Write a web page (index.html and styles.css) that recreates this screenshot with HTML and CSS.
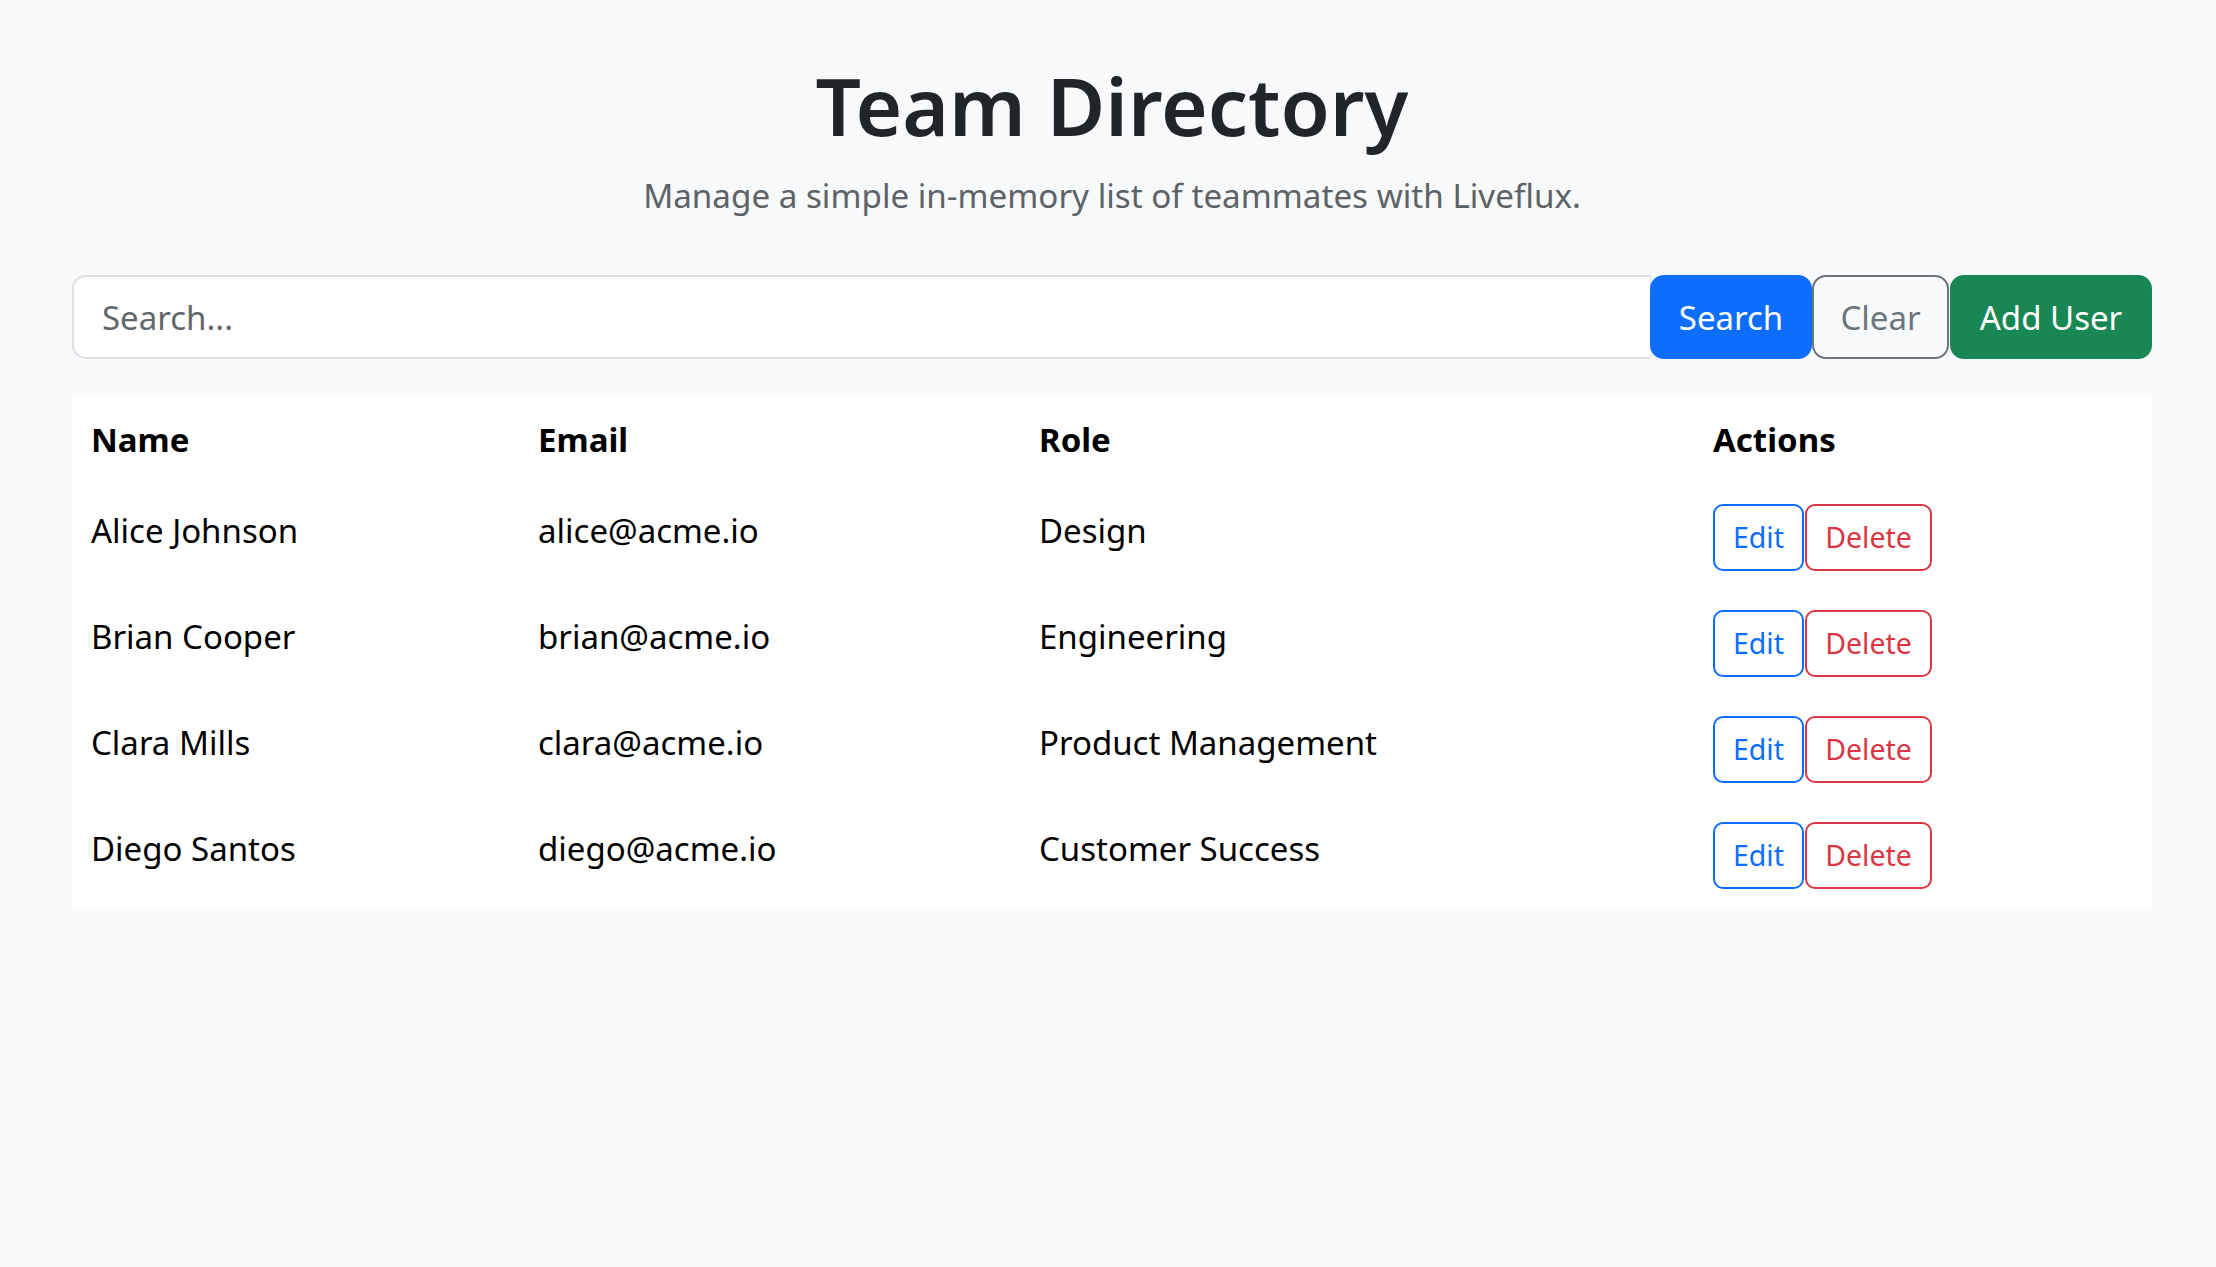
FILE: index.html
```html
<!DOCTYPE html>
<html lang="en">
<head>
<meta charset="utf-8">
<title>Team Directory</title>
<link rel="stylesheet" href="styles.css">
</head>
<body>
<main class="page">
  <header class="intro">
    <h1 class="title">Team Directory</h1>
    <p class="lead">Manage a simple in-memory list of teammates with Liveflux.</p>
  </header>

  <div class="search-group">
    <input class="search-input" type="text" placeholder="Search...">
    <button class="btn-lg btn-primary btn-search">Search</button>
    <button class="btn-lg btn-outline-secondary btn-clear">Clear</button>
    <button class="btn-lg btn-success btn-add">Add User</button>
  </div>

  <table class="users">
    <colgroup>
      <col class="col-name">
      <col class="col-email">
      <col class="col-role">
      <col class="col-actions">
    </colgroup>
    <thead>
      <tr><th>Name</th><th>Email</th><th>Role</th><th>Actions</th></tr>
    </thead>
    <tbody>
      <tr>
        <td>Alice Johnson</td><td>alice@acme.io</td><td>Design</td>
        <td><div class="actions"><button class="btn-sm btn-edit">Edit</button><button class="btn-sm btn-delete">Delete</button></div></td>
      </tr>
      <tr>
        <td>Brian Cooper</td><td>brian@acme.io</td><td>Engineering</td>
        <td><div class="actions"><button class="btn-sm btn-edit">Edit</button><button class="btn-sm btn-delete">Delete</button></div></td>
      </tr>
      <tr>
        <td>Clara Mills</td><td>clara@acme.io</td><td>Product Management</td>
        <td><div class="actions"><button class="btn-sm btn-edit">Edit</button><button class="btn-sm btn-delete">Delete</button></div></td>
      </tr>
      <tr>
        <td>Diego Santos</td><td>diego@acme.io</td><td>Customer Success</td>
        <td><div class="actions"><button class="btn-sm btn-edit">Edit</button><button class="btn-sm btn-delete">Delete</button></div></td>
      </tr>
    </tbody>
  </table>
</main>
</body>
</html>
```

FILE: styles.css
```css
* { box-sizing: border-box; }

html, body {
  margin: 0;
  background: #f8f9fa;
  font-family: "Noto Sans", "Open Sans", sans-serif;
  color: #212529;
}

.page {
  width: 2080px;
  margin-left: 72px;
  padding-top: 55px;
  padding-bottom: 40px;
}

.intro {
  text-align: center;
}

.title {
  margin: 0;
  font-size: 80px;
  line-height: 100px;
  font-weight: 600;
  color: #212529;
}

.lead {
  margin: 16px 0 0;
  font-size: 33.2px;
  line-height: 50px;
  color: #5d6267;
}

.search-group {
  display: flex;
  margin-top: 54px;
  height: 84px;
}

.search-input {
  flex: 1;
  min-width: 0;
  height: 84px;
  margin: 0 -2px 0 0;
  padding: 0 28px;
  border: 2px solid #dee2e6;
  border-right-color: #e9ecef;
  border-radius: 14px 0 0 14px;
  background: #fff;
  font-family: inherit;
  font-size: 33px;
  color: #212529;
  outline: none;
}

.search-input::placeholder {
  color: #61666b;
  opacity: 1;
}

.btn-lg {
  height: 84px;
  padding: 0;
  border: 2px solid transparent;
  border-radius: 14px;
  font-family: inherit;
  font-size: 33px;
  line-height: 1;
  cursor: pointer;
  position: relative;
}

.btn-primary { background: #0d6efd; border-color: #0d6efd; color: #fff; }
.btn-success { background: #198754; border-color: #198754; color: #fff; }
.btn-outline-secondary { background: transparent; border-color: #6c757d; color: #6c757d; }

.btn-search { width: 162px; }
.btn-clear { width: 137px; }
.btn-add { width: 202px; margin-left: 1px; }

.users {
  width: 2080px;
  margin-top: 34px;
  border-collapse: collapse;
  table-layout: fixed;
  background: #fff;
  color: #000;
}

.col-name { width: 447px; }
.col-email { width: 501px; }
.col-role { width: 674px; }
.col-actions { width: 458px; }

.users th,
.users td {
  padding: 19.5px 19px;
  text-align: left;
  vertical-align: top;
  line-height: 52.5px;
}

.users th {
  font-size: 33px;
  font-weight: 700;
  padding-top: 20.5px;
  padding-bottom: 18.5px;
}

.users td {
  font-size: 33px;
  font-weight: 400;
}

.cell-text { display: block; }

.users td:not(:last-child) {
  padding-top: 20.5px;
  padding-bottom: 18.5px;
}

.actions {
  display: flex;
  gap: 1px;
}

.btn-sm {
  height: 67px;
  padding: 0;
  border: 2px solid;
  border-radius: 10px;
  background: #fff;
  font-family: inherit;
  font-size: 28.5px;
  line-height: 1;
  cursor: pointer;
}

.btn-edit { width: 91px; color: #0d6efd; border-color: #0d6efd; }
.btn-delete { width: 127px; color: #dc3545; border-color: #dc3545; }
```
